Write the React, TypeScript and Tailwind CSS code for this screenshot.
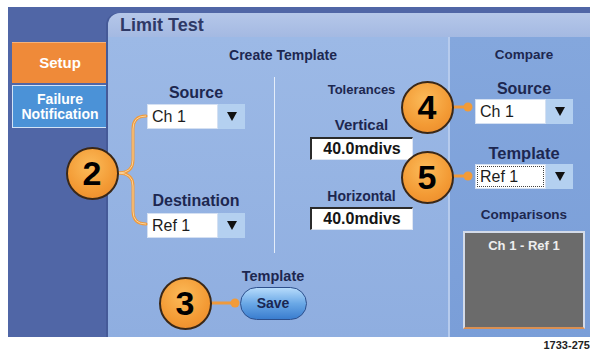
import React from "react";

const font = "font-['Liberation_Sans',Arial,sans-serif]";

const Arrow = () => (
  <svg width="10" height="9" viewBox="0 0 10 9">
    <polygon points="0,0 10,0 5,9" fill="#111" />
  </svg>
);

const Dropdown = ({ value, focus }: { value: string; focus?: boolean }) => (
  <div className="flex h-[25px] w-[98px]">
    <div className="flex-1 bg-white border border-[#d4e0f2] p-[1px]">
      <div
        className={
          "h-full flex items-center pl-[2px] text-[16px] leading-none text-[#1c1c1c] " +
          (focus ? "border border-dotted border-[#444]" : "border border-transparent")
        }
      >
        {value}
      </div>
    </div>
    <div className="w-[27px] bg-[#b4d0f0] flex items-center justify-center">
      <Arrow />
    </div>
  </div>
);

const ValueBox = ({ value }: { value: string }) => (
  <div className="w-[103px] h-[23px] bg-white border-t-2 border-l-2 border-t-[#2b2b2b] border-l-[#2b2b2b] border-r border-b border-r-[#dfe6f2] border-b-[#dfe6f2] flex items-center justify-center text-[16px] font-bold text-[#151515] leading-none">
    {value}
  </div>
);

const Label = ({ text, size }: { text: string; size: string }) => (
  <div className={"font-bold text-[#1d2750] leading-[18px] " + size}>{text}</div>
);

const Callout = ({ n, x, y }: { n: string; x: number; y: number }) => (
  <div
    className="absolute w-[53px] h-[53px] rounded-full border-2 border-[#3a2818] bg-[radial-gradient(circle_at_45%_35%,#fbbb5a,#f39a34_60%,#e8862a)] flex items-center justify-center text-[34px] font-bold text-black leading-none"
    style={{ left: x - 26.5, top: y - 26.5 }}
  >
    {n}
  </div>
);

export default function App() {
  return (
    <div className={"relative w-[590px] h-[352px] bg-white overflow-hidden " + font}>
      <div className="ml-[8px] mt-[7px] h-[330px] w-[582px] bg-[#5066a6] flex">
        {/* side tabs */}
        <div className="w-[100px] pt-[35px] pl-[4px] flex flex-col gap-[2px]">
          <div className="w-[96px] h-[41px] bg-[#ef8a39] border-t border-[#f5b27a] flex items-center justify-center text-white font-bold text-[15px]">
            Setup
          </div>
          <div className="w-[96px] h-[43px] bg-[#4b92d7] border border-[#d3e3f6] flex flex-col items-center justify-center text-white font-bold text-[14px] leading-[15px]">
            <span>Failure</span>
            <span>Notification</span>
          </div>
        </div>

        {/* Limit Test panel */}
        <div className="flex-1 mt-[6px] rounded-tl-[12px] overflow-hidden flex flex-col shadow-[-2px_0_0_#455a98]">
          <div className="h-[24px] bg-gradient-to-b from-[#b5c7e9] to-[#a4b9e2] pl-[12px] flex items-center text-[18px] font-bold text-[#2e3966] leading-none">
            Limit Test
          </div>
          <div className="flex-1 flex">
            {/* Create Template */}
            <div className="w-[340px] bg-gradient-to-b from-[#9cb9e6] to-[#8faee0] flex flex-col">
              <div className="pt-[10px] text-center pl-[10px] text-[14px] font-bold text-[#1d2750] leading-[16px]">
                Create Template
              </div>
              <div className="mt-[14px] flex h-[176px]">
                <div className="w-[166px] pl-[39px] pt-[7px] flex flex-col">
                  <div className="w-[98px] flex flex-col items-center gap-[2px]">
                    <Label text="Source" size="text-[16px]" />
                    <Dropdown value="Ch 1" />
                  </div>
                  <div className="w-[98px] mt-[63px] flex flex-col items-center gap-[3px]">
                    <Label text="Destination" size="text-[16px]" />
                    <Dropdown value="Ref 1" />
                  </div>
                </div>
                <div className="w-[1px] bg-[#e4edf9]" />
                <div className="flex-1 pt-[5px] flex flex-col items-center">
                  <div className="text-[13px] font-bold text-[#1d2750] leading-[16px]">Tolerances</div>
                  <div className="mt-[18px] flex flex-col items-center gap-[3px]">
                    <Label text="Vertical" size="text-[15px]" />
                    <ValueBox value="40.0mdivs" />
                  </div>
                  <div className="mt-[27px] flex flex-col items-center gap-[2px]">
                    <Label text="Horizontal" size="text-[14px]" />
                    <ValueBox value="40.0mdivs" />
                  </div>
                </div>
              </div>
              <div className="mt-[15px] pr-[10px] flex flex-col items-center gap-[3px]">
                <div className="text-[14.5px] font-bold text-[#1d2750] leading-[16px]">Template</div>
                <div className="w-[67px] h-[33px] rounded-full border-[1.5px] border-[#2c4f8c] bg-gradient-to-b from-[#b6dbfb] via-[#6aa8e6] to-[#3a7dcf] flex items-center justify-center text-[14px] font-bold text-[#1a2752]">
                  Save
                </div>
              </div>
            </div>

            {/* Compare */}
            <div className="flex-1 bg-gradient-to-b from-[#84a7dd] to-[#7a9ed8] border-l-2 border-[#b6cbed] pl-[8px] flex flex-col items-center">
              <div className="pt-[10px] text-[13.5px] font-bold text-[#1d2750] leading-[16px]">Compare</div>
              <div className="mt-[17px] flex flex-col items-center gap-[1px]">
                <Label text="Source" size="text-[16px]" />
                <Dropdown value="Ch 1" />
              </div>
              <div className="mt-[20px] flex flex-col items-center gap-[2px]">
                <Label text="Template" size="text-[16.5px]" />
                <Dropdown value="Ref 1" focus />
              </div>
              <div className="mt-[17px] text-[13.5px] font-bold text-[#1d2750] leading-[17px]">Comparisons</div>
              <div className="mt-[8px] w-[122px] h-[98px] bg-[#6b6b6b] border-2 border-[#d3dbe9] border-b-[#d98f52] pt-[3px] text-center text-[13px] font-bold text-[#eeeeee]">
                Ch 1 - Ref 1
              </div>
            </div>
          </div>
        </div>
      </div>

      <div className="pt-[2px] text-right text-[11px] font-bold text-[#222] leading-[13px]">1733-275</div>

      {/* callout connectors */}
      <svg className="absolute inset-0 pointer-events-none" width="590" height="352">
        <g fill="none" stroke="#ef9a3c" strokeWidth="3" strokeLinecap="round">
          <path d="M118,173 Q133,173 133,160 L133,129 Q133,116 146,116" />
          <path d="M118,173 Q133,173 133,186 L133,211 Q133,224 146,224" />
          <line x1="453" y1="107" x2="468" y2="107" />
          <line x1="453" y1="176" x2="468" y2="176" />
          <line x1="211" y1="303" x2="235" y2="303" />
        </g>
        <g fill="none" stroke="#fbd39a" strokeWidth="1">
          <path d="M118,173 Q133,173 133,160 L133,129 Q133,116 146,116" />
          <path d="M118,173 Q133,173 133,186 L133,211 Q133,224 146,224" />
        </g>
        <g fill="#f29b38">
          <circle cx="468" cy="107" r="4.5" />
          <circle cx="468" cy="176" r="4.5" />
          <circle cx="235" cy="303" r="4.5" />
        </g>
      </svg>

      <Callout n="2" x={92} y={173} />
      <Callout n="3" x={185} y={303} />
      <Callout n="4" x={427} y={107} />
      <Callout n="5" x={427} y={177} />
    </div>
  );
}
